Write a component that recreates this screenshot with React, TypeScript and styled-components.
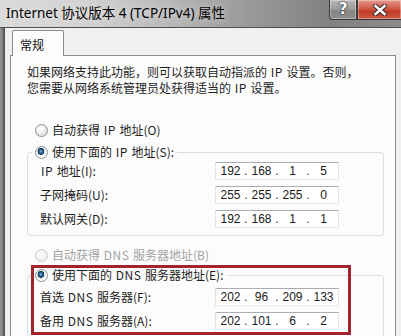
import React from "react";
import styled, { createGlobalStyle } from "styled-components";

const GlobalStyle = createGlobalStyle`
  html, body { margin: 0; padding: 0; }
  body {
    width: 401px;
    height: 336px;
    overflow: hidden;
    background: #f0f0f0;
    font-family: "Noto Sans CJK SC", "Noto Sans", sans-serif;
  }
`;

const Window = styled.div`
  width: 401px;
  height: 336px;
  display: flex;
  flex-direction: column;
  overflow: hidden;
`;

const TitleBar = styled.div`
  flex: none;
  height: 27px;
  display: flex;
  align-items: flex-start;
  justify-content: space-between;
  background: linear-gradient(90deg, #dadada 0%, #d2d2d2 22%, #b9b9b9 42%, #999 62%, #818181 82%, #8b8b8b 100%);
  border-bottom: 1px solid #4f4f4f;
`;

const Title = styled.div`
  padding-left: 6px;
  line-height: 27px;
  font-size: 13.5px;
  color: #000;
  font-family: "Noto Sans", "Noto Sans CJK SC", sans-serif;
  text-shadow: 0 0 6px rgba(255, 255, 255, 0.7);
  white-space: nowrap;
`;

const Controls = styled.div`
  display: flex;
`;

const CaptionButton = styled.div<{ $kind: "help" | "close" }>`
  box-sizing: border-box;
  height: 20px;
  width: ${(p) => (p.$kind === "close" ? "44px" : "28px")};
  display: flex;
  align-items: center;
  justify-content: center;
  border: 1px solid #3a3a3a;
  border-top: none;
  border-right: ${(p) => (p.$kind === "close" ? "none" : "1px solid #3a3a3a")};
  border-bottom-left-radius: ${(p) => (p.$kind === "help" ? "4px" : "0")};
  background: ${(p) =>
    p.$kind === "close"
      ? "linear-gradient(180deg, #e29a8e 0%, #d25a48 45%, #c03a26 60%, #cf5a40 100%)"
      : "linear-gradient(180deg, #b9b9b9 0%, #9c9c9c 45%, #858585 60%, #8f8f8f 100%)"};
  box-shadow: inset 0 0 0 1px rgba(255, 255, 255, 0.35);
  color: #fff;
  font-family: "DejaVu Sans", sans-serif;
  font-weight: bold;
  font-size: 15px;
  line-height: 1;
  text-shadow: 0 0 2px #222, 0 0 1px #000;
`;

const Body = styled.div`
  flex: 1;
  display: flex;
  min-height: 0;
`;

const SideFrame = styled.div`
  flex: none;
  width: 5px;
  background: linear-gradient(90deg, #9a9a9a, #777 55%, #454545);
`;

const Client = styled.div`
  flex: 1;
  display: flex;
  flex-direction: column;
  background: #f0f0f0;
  padding: 2px 5px 0 5px;
  min-width: 0;
`;

const TabStrip = styled.div`
  display: flex;
  padding-left: 2px;
`;

const Tab = styled.div`
  box-sizing: border-box;
  position: relative;
  z-index: 1;
  width: 52px;
  height: 26px;
  margin-bottom: -1px;
  padding: 5px 0 0 7px;
  border: 1px solid #898c95;
  border-bottom: none;
  border-radius: 2px 2px 0 0;
  background: #fcfcfc;
  font-size: 12px;
  line-height: 18px;
  color: #111;
`;

const Panel = styled.div`
  position: relative;
  flex: 1;
  border: 1px solid #898c95;
  background: #fcfcfc;
  padding: 8px 11px 0 16px;
  color: #1e1e1e;
  font-size: 12px;
`;

const Description = styled.p`
  margin: 0;
  line-height: 16px;
  white-space: nowrap;
`;

/* half-width runs in the SimSun original are wider than Noto's Latin */
const Latin = styled.span`
  padding: 0 1px;
  letter-spacing: 0.5px;
`;

const RadioRow = styled.label<{ $disabled?: boolean; $gap?: number }>`
  display: flex;
  align-items: center;
  gap: 4px;
  height: 16px;
  line-height: 16px;
  padding-left: 8px;
  margin-top: ${(p) => p.$gap ?? 0}px;
  color: ${(p) => (p.$disabled ? "#a3a3a3" : "#1e1e1e")};
  white-space: nowrap;
`;

const Radio = styled.span<{ $checked?: boolean; $disabled?: boolean }>`
  box-sizing: border-box;
  flex: none;
  width: 13px;
  height: 13px;
  border-radius: 50%;
  border: 1px solid ${(p) => (p.$disabled ? "#c9c9c9" : "#8d8f91")};
  background: ${(p) =>
    p.$checked
      ? "radial-gradient(circle at 45% 40%, #9cc3e6 0, #2e6a9c 1.5px, #123955 3.2px, #e9e9e9 3.6px, #fff 6px)"
      : p.$disabled
      ? "radial-gradient(circle at 40% 35%, #fafafa, #ececec)"
      : "radial-gradient(circle at 40% 35%, #fff 10%, #d8d8d8 90%)"};
`;

const Group = styled.fieldset<{ $gap?: number }>`
  margin: ${(p) => p.$gap ?? 0}px 0 0 0;
  min-width: 0;
  padding: 0 11px 7px 12px;
  border: 1px solid #d5dfe5;
  border-radius: 3px;
`;

const Legend = styled.legend`
  margin-left: -8px;
  padding: 0 3px;
  height: 16px;
`;

const LegendLabel = styled.span`
  display: flex;
  align-items: center;
  gap: 4px;
  line-height: 16px;
  white-space: nowrap;
`;

const Rows = styled.div<{ $top: number }>`
  display: grid;
  grid-template-columns: 175px 124px;
  row-gap: 6px;
  padding-top: ${(p) => p.$top}px;
`;

const FieldLabel = styled.span`
  line-height: 18px;
  white-space: nowrap;
`;

const IpBox = styled.div`
  box-sizing: border-box;
  height: 18px;
  display: flex;
  align-items: center;
  padding: 0 1px;
  background: #fff;
  border: 1px solid #e2e3ea;
  border-top-color: #abadb3;
  border-bottom-color: #e3e9ef;
  font-family: "Liberation Sans", "DejaVu Sans", sans-serif;
  font-size: 12px;
  color: #1a1a1a;
`;

const Octet = styled.span`
  width: 27px;
  text-align: center;
`;

const Dot = styled.span`
  width: 4px;
  text-align: center;
`;

const Highlight = styled.div`
  position: absolute;
  left: 20px;
  top: 209px;
  width: 320px;
  height: 70px;
  box-sizing: border-box;
  border: 3px solid #a2242c;
  pointer-events: none;
`;

const CloseGlyph = () => (
  <svg width="14" height="12" viewBox="0 0 14 12">
    <path d="M2.5 2 L11.5 10 M11.5 2 L2.5 10" stroke="#3a2a2a" strokeWidth="4.6" strokeLinecap="square" />
    <path d="M2.5 2 L11.5 10 M11.5 2 L2.5 10" stroke="#fff" strokeWidth="2.6" strokeLinecap="square" />
  </svg>
);

const IpField = ({ value }: { value: string }) => {
  const parts = value.split(".");
  return (
    <IpBox>
      {parts.map((p, i) => (
        <React.Fragment key={i}>
          <Octet>{p}</Octet>
          {i < parts.length - 1 && <Dot>.</Dot>}
        </React.Fragment>
      ))}
    </IpBox>
  );
};

const ipRows = [
  { label: "地址(I):", prefix: "IP", value: "192.168.1.5" },
  { label: "子网掩码(U):", value: "255.255.255.0" },
  { label: "默认网关(D):", value: "192.168.1.1" },
];

const dnsRows = [
  { label: "首选", mid: "DNS", rest: "服务器(F):", value: "202.96.209.133" },
  { label: "备用", mid: "DNS", rest: "服务器(A):", value: "202.101.6.2" },
];

export default function App() {
  return (
    <>
      <GlobalStyle />
      <Window>
        <TitleBar>
          <Title>Internet 协议版本 4 (TCP/IPv4) 属性</Title>
          <Controls>
            <CaptionButton $kind="help">?</CaptionButton>
            <CaptionButton $kind="close">
              <CloseGlyph />
            </CaptionButton>
          </Controls>
        </TitleBar>
        <Body>
          <SideFrame />
          <Client>
            <TabStrip>
              <Tab>常规</Tab>
            </TabStrip>
            <Panel>
              <Description>
                如果网络支持此功能，则可以获取自动指派的 <Latin>IP</Latin> 设置。否则，
                <br />
                您需要从网络系统管理员处获得适当的 <Latin>IP</Latin> 设置。
              </Description>

              <RadioRow $gap={26}>
                <Radio />
                <span>
                  自动获得 <Latin>IP</Latin> 地址(O)
                </span>
              </RadioRow>

              <Group $gap={6}>
                <Legend>
                  <LegendLabel>
                    <Radio $checked />
                    <span>
                      使用下面的 <Latin>IP</Latin> 地址(S):
                    </span>
                  </LegendLabel>
                </Legend>
                <Rows $top={2}>
                  {ipRows.map((r) => (
                    <React.Fragment key={r.label}>
                      <FieldLabel>
                        {r.prefix && (
                          <>
                            <Latin>{r.prefix}</Latin>{" "}
                          </>
                        )}
                        {r.label}
                      </FieldLabel>
                      <IpField value={r.value} />
                    </React.Fragment>
                  ))}
                </Rows>
              </Group>

              <RadioRow $gap={11} $disabled>
                <Radio $disabled />
                <span>
                  自动获得 <Latin>DNS</Latin> 服务器地址(B)
                </span>
              </RadioRow>

              <Group $gap={4}>
                <Legend>
                  <LegendLabel>
                    <Radio $checked />
                    <span>
                      使用下面的 <Latin>DNS</Latin> 服务器地址(E):
                    </span>
                  </LegendLabel>
                </Legend>
                <Rows $top={5}>
                  {dnsRows.map((r) => (
                    <React.Fragment key={r.label}>
                      <FieldLabel>
                        {r.label} <Latin>{r.mid}</Latin> {r.rest}
                      </FieldLabel>
                      <IpField value={r.value} />
                    </React.Fragment>
                  ))}
                </Rows>
              </Group>

              <Highlight />
            </Panel>
          </Client>
        </Body>
      </Window>
    </>
  );
}
